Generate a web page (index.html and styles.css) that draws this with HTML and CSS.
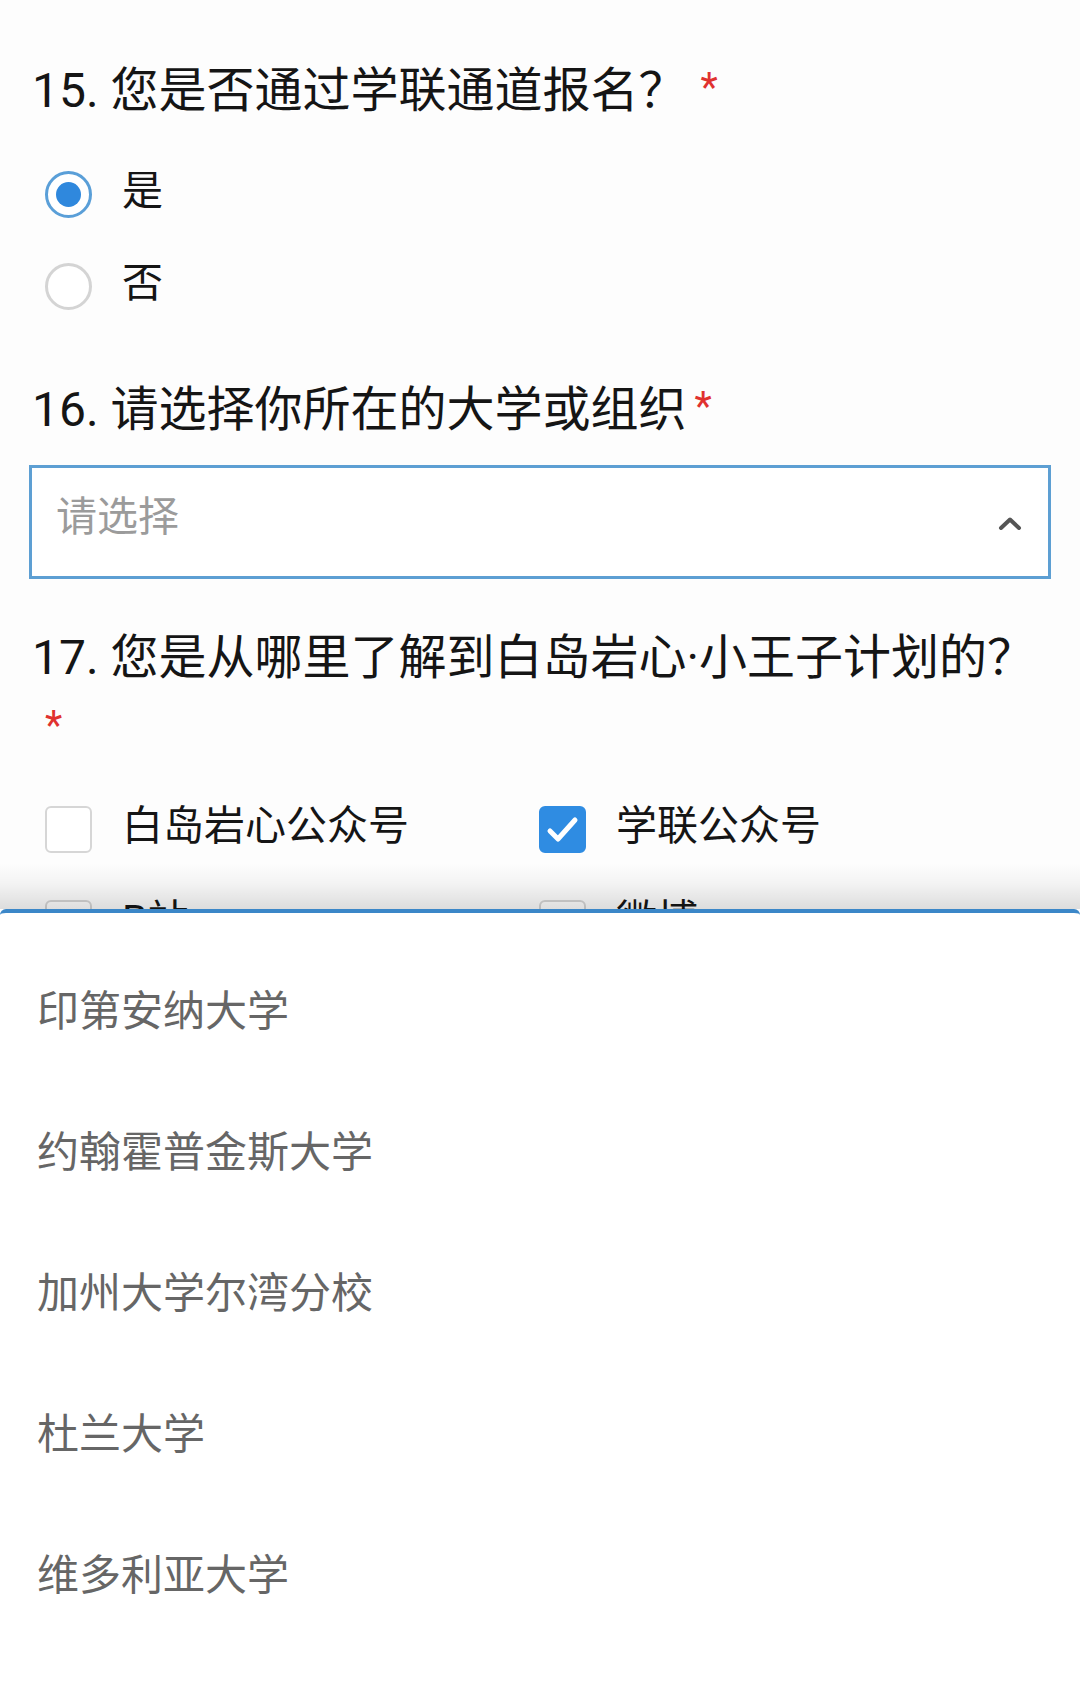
FILE: index.html
```html
<!DOCTYPE html>
<html lang="zh-CN">
<head>
<meta charset="utf-8">
<title>问卷</title>
<link rel="stylesheet" href="styles.css">
</head>
<body>
<div class="page">
  <main class="form">
    <section class="question q15">
      <h2 class="q-title">15. 您是否通过学联通道报名？<span class="req req-gap">*</span></h2>
      <div class="radio-list">
        <label class="option">
          <span class="radio checked"><span class="dot"></span></span>
          <span class="opt-text">是</span>
        </label>
        <label class="option">
          <span class="radio"></span>
          <span class="opt-text">否</span>
        </label>
      </div>
    </section>

    <section class="question q16">
      <h2 class="q-title">16. 请选择你所在的大学或组织<span class="req">*</span></h2>
      <div class="select">
        <span class="placeholder">请选择</span>
        <svg class="chevron" width="24" height="14" viewBox="0 0 24 14"><polyline points="3,12 12,3.5 21,12" fill="none" stroke="#555" stroke-width="4" stroke-linecap="round" stroke-linejoin="round"/></svg>
      </div>
    </section>

    <section class="question q17">
      <h2 class="q-title">17. 您是从哪里了解到白岛岩心·小王子计划的？<span class="req req-line">*</span></h2>
      <div class="check-grid">
        <label class="option">
          <span class="checkbox"></span>
          <span class="opt-text">白岛岩心公众号</span>
        </label>
        <label class="option">
          <span class="checkbox checked"><svg width="47" height="47" viewBox="0 0 47 47"><polyline points="11,25 19,33 36,14" fill="none" stroke="#fff" stroke-width="5" stroke-linecap="round" stroke-linejoin="round"/></svg></span>
          <span class="opt-text">学联公众号</span>
        </label>
        <label class="option">
          <span class="checkbox"></span>
          <span class="opt-text">B站</span>
        </label>
        <label class="option">
          <span class="checkbox"></span>
          <span class="opt-text">微博</span>
        </label>
      </div>
    </section>
  </main>

  <div class="sheet">
    <ul class="sheet-list">
      <li class="sheet-item">印第安纳大学</li>
      <li class="sheet-item">约翰霍普金斯大学</li>
      <li class="sheet-item">加州大学尔湾分校</li>
      <li class="sheet-item">杜兰大学</li>
      <li class="sheet-item">维多利亚大学</li>
    </ul>
  </div>
</div>
</body>
</html>
```
FILE: styles.css
```css
* { box-sizing: border-box; }
html, body {
  margin: 0;
  padding: 0;
  background: #ffffff;
}
body {
  font-family: Roboto, "Noto Sans CJK SC", sans-serif;
  color: #151515;
}
.page {
  position: relative;
  width: 1080px;
  height: 1682px;
  overflow: hidden;
  background: #fdfdfd;
}
.form {
  padding: 59px 32px 0 32px;
}
.question { margin: 0; }
.q-title {
  margin: 0;
  font-size: 48px;
  font-weight: 400;
  line-height: 64px;
  color: #151515;
}
.req {
  color: #e0322f;
  font-size: 40px;
  margin-left: 8px;
  position: relative;
  top: -6px;
}
.req-gap { margin-left: 14px; }
.req-line { display: block; margin-left: 13px; top: 4px; line-height: 64px; }

.radio-list {
  margin-top: 22px;
  display: flex;
  flex-direction: column;
}
.option {
  display: flex;
  align-items: center;
  height: 92px;
  padding-left: 13px;
  gap: 30px;
}
.opt-text {
  font-size: 41px;
  color: #151515;
  line-height: 1;
  position: relative;
  top: -3px;
}
.radio {
  width: 47px;
  height: 47px;
  border-radius: 50%;
  border: 3px solid #d4d4d4;
  background: #fff;
  display: flex;
  align-items: center;
  justify-content: center;
  flex: none;
}
.radio.checked { border-color: #5a9fd8; }
.radio .dot {
  width: 25px;
  height: 25px;
  border-radius: 50%;
  background: #2f88dd;
}

.q16 { margin-top: 46px; }
.select {
  margin: 20px -3px 0 -3px;
  height: 114px;
  border: 3px solid #5d9fd3;
  background: #fff;
  display: flex;
  align-items: center;
  justify-content: space-between;
  padding: 0 26px 0 24px;
}
.placeholder {
  font-size: 41px;
  color: #9b9b9b;
  position: relative;
  top: -9px;
}
.chevron { display: block; margin-top: 2px; }

.q17 { margin-top: 47px; }
.check-grid {
  margin-top: 28px;
  display: grid;
  grid-template-columns: 507px 1fr;
}
.check-grid .option { height: 94px; }
.check-grid .option:nth-child(2n) { padding-left: 0; }
.checkbox {
  width: 47px;
  height: 47px;
  border: 2px solid #d6d6d6;
  border-radius: 6px;
  background: #fff;
  flex: none;
  position: relative;
}
.checkbox.checked {
  background: #2f8ce2;
  border-color: #2f8ce2;
}
.checkbox.checked svg {
  position: absolute;
  left: -2px;
  top: -2px;
}

.sheet {
  position: absolute;
  left: 0;
  right: 0;
  top: 909px;
  bottom: 0;
  background: #ffffff;
  border-top: 4px solid #3b87c8;
  border-radius: 6px 6px 0 0;
}
.sheet::before {
  content: "";
  position: absolute;
  left: 0;
  right: 0;
  top: -50px;
  height: 46px;
  background: linear-gradient(to bottom, rgba(0,0,0,0) 0%, rgba(0,0,0,0.04) 45%, rgba(0,0,0,0.13) 100%);
}
.sheet-list {
  list-style: none;
  margin: 0;
  padding: 24px 0 0 0;
}
.sheet-item {
  height: 141px;
  display: flex;
  align-items: center;
  padding-left: 37px;
  font-size: 42px;
  color: #666666;
}
```
